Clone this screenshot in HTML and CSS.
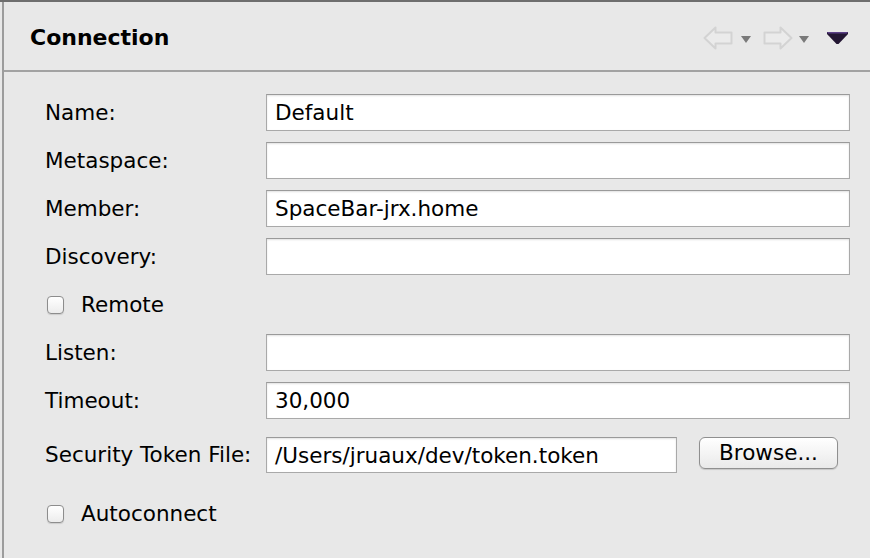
FILE: index.html
```html
<!DOCTYPE html>
<html>
<head>
<meta charset="utf-8">
<link rel="stylesheet" href="styles.css">
</head>
<body>
<div class="view">
  <div class="panel">
    <div class="header">
      <h1 class="title">Connection</h1>
      <div class="tools">
        <svg class="arrow arrow-back" width="30" height="24" viewBox="0 0 30 24"><path d="M1.5 12 L12.5 1.5 L12.5 6.5 L28.5 6.5 L28.5 17.5 L12.5 17.5 L12.5 22.5 Z" fill="#ebebeb" stroke="#d3d3d3" stroke-width="2" stroke-linejoin="round"/></svg>
        <svg class="drop" width="10" height="7" viewBox="0 0 10 7"><polygon points="0,0 10,0 5,7" fill="#7a7a7a"/></svg>
        <svg class="arrow arrow-fwd" width="30" height="24" viewBox="0 0 30 24"><path d="M28.5 12 L17.5 1.5 L17.5 6.5 L1.5 6.5 L1.5 17.5 L17.5 17.5 L17.5 22.5 Z" fill="#ebebeb" stroke="#d3d3d3" stroke-width="2" stroke-linejoin="round"/></svg>
        <svg class="drop" width="10" height="7" viewBox="0 0 10 7"><polygon points="0,0 10,0 5,7" fill="#7a7a7a"/></svg>
        <svg class="menu" width="21" height="12" viewBox="0 0 21 12"><polygon points="0,0 21,0 21,2 11.5,12 9.5,12 0,2" fill="#231633"/><polygon points="0,0 21,0 20,1.5 1,1.5" fill="#5b3f86"/></svg>
      </div>
    </div>
    <div class="form">
      <label class="lbl">Name:</label>
      <div class="field"><div class="input">Default</div></div>

      <label class="lbl">Metaspace:</label>
      <div class="field"><div class="input"></div></div>

      <label class="lbl">Member:</label>
      <div class="field"><div class="input">SpaceBar-jrx.home</div></div>

      <label class="lbl">Discovery:</label>
      <div class="field"><div class="input"></div></div>

      <div class="check-row"><span class="checkbox"></span><span class="check-label">Remote</span></div>

      <label class="lbl">Listen:</label>
      <div class="field"><div class="input"></div></div>

      <label class="lbl">Timeout:</label>
      <div class="field"><div class="input">30,000</div></div>

      <label class="lbl lbl-token">Security Token File:</label>
      <div class="field field-token"><div class="input">/Users/jruaux/dev/token.token</div><button class="btn">Browse...</button></div>

      <div class="check-row check-auto"><span class="checkbox"></span><span class="check-label">Autoconnect</span></div>
    </div>
  </div>
</div>
</body>
</html>
```
FILE: styles.css
```css
html, body {
  margin: 0;
  padding: 0;
  background: #e8e8e8;
}
body {
  width: 870px;
  height: 558px;
  overflow: hidden;
  font-family: "DejaVu Sans", "Noto Sans", sans-serif;
  color: #000;
}
.view {
  border-top: 2px solid #6e6e6e;
  height: 556px;
}
.panel {
  margin-left: 2px;
  border-left: 2px solid #9c9c9c;
  height: 556px;
  display: flex;
  flex-direction: column;
}
.header {
  height: 68px;
  border-bottom: 2px solid #a2a2a2;
  display: flex;
  align-items: center;
  padding-left: 26px;
  padding-right: 22px;
  box-sizing: content-box;
}
.title {
  margin: 0;
  font-size: 22px;
  font-weight: bold;
  flex: 1;
  padding-top: 2px;
}
.tools {
  display: flex;
  align-items: center;
  padding-top: 3px;
}
.arrow { display: block; }
.drop { display: block; margin-left: 8px; margin-top: 3px; }
.arrow-fwd { margin-left: 12px; }
.arrow-fwd + .drop { margin-left: 6px; }
.menu { display: block; margin-left: 18px; }

.form {
  display: grid;
  grid-template-columns: 221px 1fr;
  grid-auto-rows: minmax(37px, auto);
  row-gap: 11px;
  padding: 22px 20px 0 41px;
  font-size: 21.5px;
}
.lbl {
  display: flex;
  align-items: center;
  white-space: nowrap;
  padding-bottom: 1px;
}
.field {
  display: flex;
  align-items: flex-start;
}
.input {
  flex: 1;
  height: 37px;
  background: #fff;
  border: 1px solid #a9a9a9;
  border-top-color: #9a9a9a;
  box-shadow: inset 0 1px 2px rgba(0,0,0,0.12);
  padding: 0 8px;
  display: flex;
  align-items: center;
  box-sizing: border-box;
  white-space: nowrap;
}
.check-row {
  grid-column: 1 / 3;
  display: flex;
  align-items: center;
  padding-left: 2px;
}
.checkbox {
  flex: 0 0 auto;
  width: 15px;
  height: 16px;
  border: 1px solid #8d8d8d;
  border-radius: 4px;
  background: linear-gradient(#ffffff, #ececec);
  box-shadow: 0 1px 1px rgba(0,0,0,0.12);
  margin-right: 17px;
}
.lbl-token, .field-token { margin-top: 7px; }
.field-token .input { flex: 0 0 411px; height: 36px; }
.btn {
  margin-left: 22px;
  width: 139px;
  height: 32px;
  font-family: inherit;
  font-size: 21.5px;
  color: #000;
  border: 1px solid #8f8f8f;
  border-radius: 6px;
  background: linear-gradient(#ffffff, #f2f2f2 60%, #e9e9e9);
  box-shadow: 0 1px 1px rgba(0,0,0,0.15);
  padding: 0 0 1px;
}
.check-auto { margin-top: 17px; }
```
